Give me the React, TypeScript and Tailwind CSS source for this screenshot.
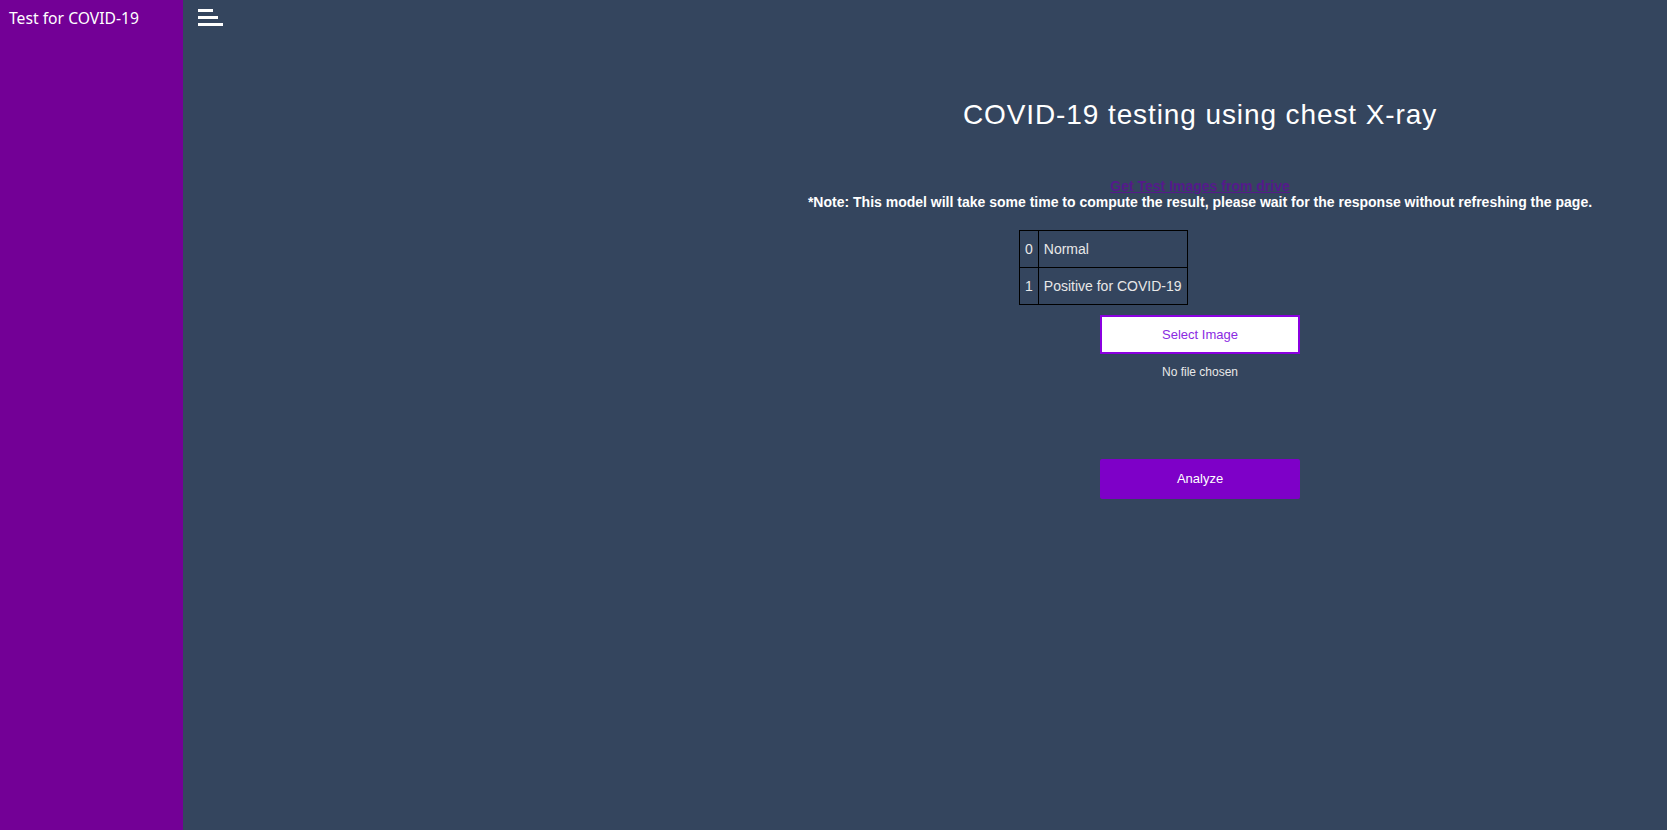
export default function App() {
  return (
    <div className="flex h-screen w-full font-['Liberation_Sans',Arial,sans-serif]">
      {/* Sidebar */}
      <aside className="w-[183px] shrink-0 bg-[#730096]">
        <div className="pl-[9px] pt-[6px] font-['Noto_Sans',sans-serif] text-[15.7px] text-white leading-[24px]">
          Test for COVID-19
        </div>
      </aside>

      {/* Main */}
      <main className="flex-1 bg-[#34455e] flex flex-col">
        <div className="pl-[15px] pt-[9px] flex flex-col gap-[4px]">
          <span className="block h-[3px] w-[15px] bg-white" />
          <span className="block h-[3px] w-[20px] bg-white" />
          <span className="block h-[3px] w-[25px] bg-white" />
        </div>

        <section className="pl-[550px] text-center">
          <h1 className="mt-[73px] text-[28px] leading-[32px] tracking-[0.9px] text-white">
            COVID-19 testing using chest X-ray
          </h1>
          <a
            href="#"
            className="block mt-[47px] text-[14px] leading-[16px] font-bold text-[#551a8b] underline"
          >
            Get Test Images from drive
          </a>
          <p className="text-[14px] leading-[16px] font-bold text-white">
            *Note: This model will take some time to compute the result, please wait for the
            response without refreshing the page.
          </p>

          <div className="w-[362px] mx-auto mt-[20px] text-left">
            <table className="border-collapse text-[14px] leading-[16px] text-[#e8e8e8]">
              <tbody>
                <tr>
                  <td className="border border-black px-[5px] py-[10px]">0</td>
                  <td className="border border-black px-[5px] py-[10px]">Normal</td>
                </tr>
                <tr>
                  <td className="border border-black px-[5px] py-[10px]">1</td>
                  <td className="border border-black px-[5px] py-[10px]">Positive for COVID-19</td>
                </tr>
              </tbody>
            </table>
          </div>

          <div className="flex flex-col items-center">
            <button className="mt-[10px] w-[200px] h-[39px] bg-white border-2 border-[#8a00e0] text-[13px] text-[#8a2be2]">
              Select Image
            </button>
            <span className="mt-[11px] text-[12px] leading-[14px] text-[#e8e8e8]">No file chosen</span>
            <button className="mt-[80px] w-[200px] h-[40px] rounded-[2px] bg-[#7e00c8] text-[13px] text-white">
              Analyze
            </button>
          </div>
        </section>
      </main>
    </div>
  );
}
